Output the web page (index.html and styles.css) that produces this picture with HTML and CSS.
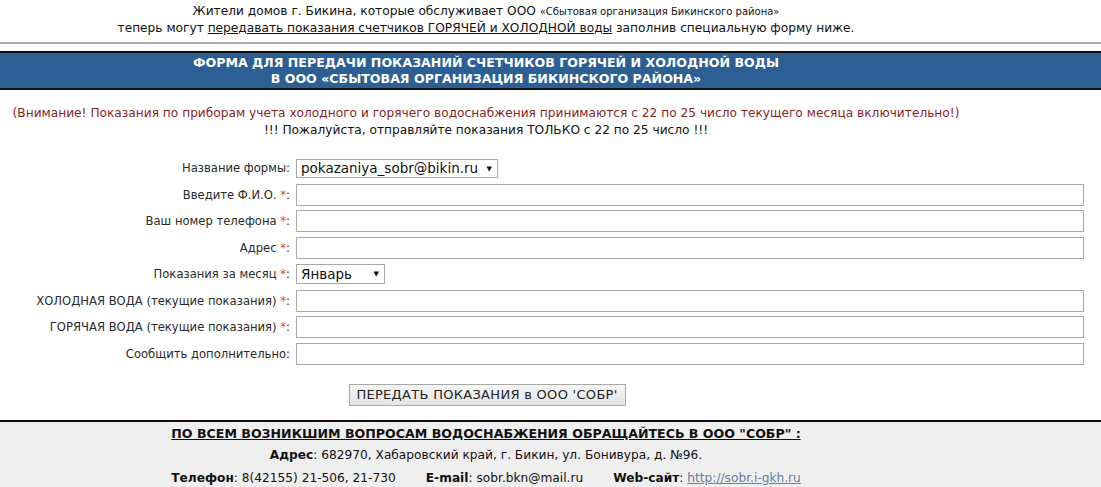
FILE: index.html
```html
<!DOCTYPE html>
<html lang="ru">
<head>
<meta charset="utf-8">
<title>Передача показаний</title>
<link rel="stylesheet" href="styles.css">
</head>
<body>
<div class="intro">
  <div class="intro-line">Жители домов г. Бикина, которые обслуживает ООО <span class="small">«Сбытовая организация Бикинского района»</span></div>
  <div class="intro-line">теперь могут <u>передавать показания счетчиков ГОРЯЧЕЙ и ХОЛОДНОЙ воды</u> заполнив специальную форму ниже.</div>
</div>
<div class="rule"></div>
<div class="band">
  <div class="band-inner">ФОРМА ДЛЯ ПЕРЕДАЧИ ПОКАЗАНИЙ СЧЕТЧИКОВ ГОРЯЧЕЙ И ХОЛОДНОЙ ВОДЫ<br>В ООО «СБЫТОВАЯ ОРГАНИЗАЦИЯ БИКИНСКОГО РАЙОНА»</div>
</div>
<div class="notice">
  <div class="warn">(Внимание! Показания по приборам учета холодного и горячего водоснабжения принимаются с 22 по 25 число текущего месяца включительно!)</div>
  <div class="plea">!!! Пожалуйста, отправляйте показания ТОЛЬКО с 22 по 25 число !!!</div>
</div>
<form class="form">
  <label class="lbl">Название формы:</label>
  <div class="field"><span class="sel sel-form"><select><option>pokazaniya_sobr@bikin.ru</option></select></span></div>

  <label class="lbl">Введите Ф.И.О. <span class="req">*</span>:</label>
  <div class="field"><input class="txt" type="text"></div>

  <label class="lbl">Ваш номер телефона <span class="req">*</span>:</label>
  <div class="field"><input class="txt" type="text"></div>

  <label class="lbl">Адрес <span class="req">*</span>:</label>
  <div class="field"><input class="txt" type="text"></div>

  <label class="lbl">Показания за месяц <span class="req">*</span>:</label>
  <div class="field"><span class="sel sel-month"><select><option>Январь</option></select></span></div>

  <label class="lbl">ХОЛОДНАЯ ВОДА (текущие показания) <span class="req">*</span>:</label>
  <div class="field"><input class="txt" type="text"></div>

  <label class="lbl">ГОРЯЧАЯ ВОДА (текущие показания) <span class="req">*</span>:</label>
  <div class="field"><input class="txt" type="text"></div>

  <label class="lbl">Сообщить дополнительно:</label>
  <div class="field"><input class="txt" type="text"></div>
</form>
<div class="actions"><button class="btn" type="button">ПЕРЕДАТЬ ПОКАЗАНИЯ в ООО 'СОБР'</button></div>
<div class="footer">
  <div class="footer-inner">
    <div class="f-title">ПО ВСЕМ ВОЗНИКШИМ ВОПРОСАМ ВОДОСНАБЖЕНИЯ ОБРАЩАЙТЕСЬ В ООО "СОБР" :</div>
    <div class="f-line f-addr"><b>Адрес</b>: 682970, Хабаровский край, г. Бикин, ул. Бонивура, д. №96.</div>
    <div class="f-line"><span class="f-item"><b>Телефон</b>: 8(42155) 21-506, 21-730</span><span class="f-item"><b>E-mail</b>: sobr.bkn@mail.ru</span><span class="f-item"><b>Web-сайт</b>: <a href="#">http://sobr.i-gkh.ru</a></span></div>
  </div>
</div>
</body>
</html>
```
FILE: styles.css
```css
html, body {
  margin: 0;
  padding: 0;
  background: #fff;
}
body {
  font-family: "DejaVu Sans", Verdana, sans-serif;
  font-size: 12.2px;
  color: #111;
  width: 1101px;
}
.intro {
  width: 972px;
  text-align: center;
  padding-top: 3px;
  line-height: 16px;
}
.small {
  font-size: 10px;
}
.rule {
  height: 0;
  border-top: 2px solid #aaa;
  margin-top: 6px;
}
.band {
  margin-top: 7px;
  background: #2c5f94;
  border-top: 2px solid #111;
  border-bottom: 2px solid #111;
}
.band-inner {
  width: 972px;
  text-align: center;
  color: #fff;
  font-weight: bold;
  font-size: 12.6px;
  line-height: 16px;
  padding: 2px 0 1px;
}
.notice {
  width: 972px;
  text-align: center;
  line-height: 17px;
  margin-top: 15px;
}
.warn {
  color: #8a1f1f;
}
.form {
  display: grid;
  grid-template-columns: 290px 1fr;
  column-gap: 6px;
  row-gap: 4.55px;
  margin: 18px 17px 0 0;
  align-items: center;
}
.lbl {
  text-align: right;
  font-size: 11.6px;
  line-height: 22px;
  color: #2a2a2a;
}
.req {
  color: #e04848;
}
.field {
  height: 22px;
  display: flex;
  align-items: center;
}
.txt {
  box-sizing: border-box;
  width: 100%;
  height: 22px;
  border: 1px solid #a9a9a9;
  margin: 0;
  padding: 0 3px;
  font: inherit;
  background: #fff;
}
.sel {
  position: relative;
  display: inline-block;
}
.sel select {
  -webkit-appearance: none;
  appearance: none;
  box-sizing: border-box;
  height: 20px;
  border: 1px solid #a9a9a9;
  border-radius: 0;
  background: #fff;
  font: inherit;
  font-size: 13.5px;
  color: #111;
  padding: 0 18px 0 4px;
  margin: 0;
}
.sel::after {
  content: "▼";
  position: absolute;
  right: 6px;
  top: 5px;
  font-size: 7px;
  line-height: 10px;
  color: #111;
  pointer-events: none;
}
.sel-form select {
  width: 202px;
  height: 19px;
}
.sel-month select {
  width: 89px;
}
.actions {
  width: 974px;
  text-align: center;
  margin-top: 19px;
}
.btn {
  box-sizing: border-box;
  height: 22px;
  width: 277px;
  font: inherit;
  font-size: 13px;
  letter-spacing: 0.3px;
  color: #222;
  border: 1px solid #a8a8a8;
  border-radius: 0;
  background: linear-gradient(#f6f6f6, #e4e4e4);
  padding: 0;
}
.footer {
  margin-top: 14px;
  border-top: 2px solid #111;
  background: #efefef;
  padding: 3px 0 8px;
}
.footer-inner {
  width: 972px;
  text-align: center;
}
.f-title {
  font-weight: bold;
  font-size: 12.6px;
  text-decoration: underline;
  line-height: 18px;
}
.f-line {
  line-height: 22px;
}
.f-line.f-addr {
  line-height: 24px;
}
.f-item + .f-item {
  margin-left: 30px;
}
.footer a {
  color: #5f7fa3;
}
```
